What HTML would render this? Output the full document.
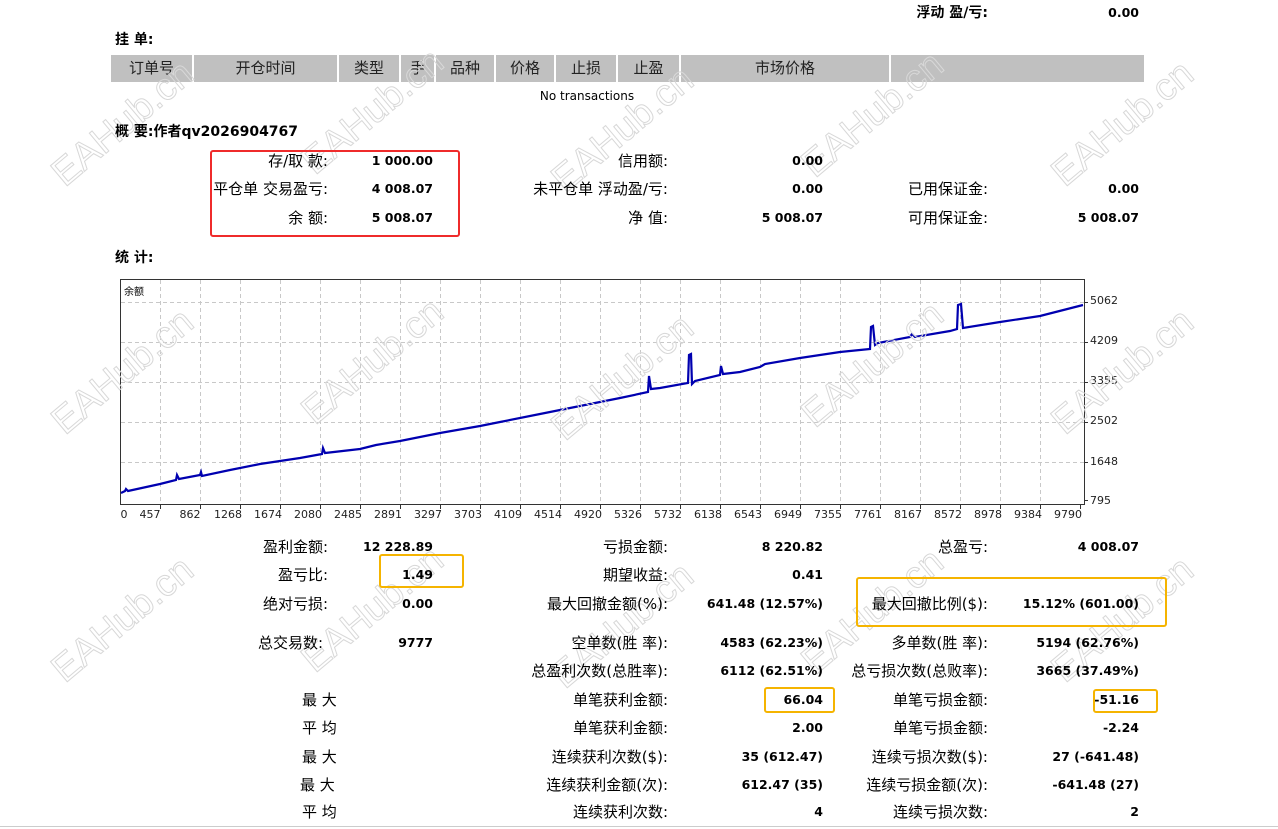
<!DOCTYPE html>
<html><head><meta charset="utf-8"><style>
body{margin:0;width:1278px;height:829px;background:#fff;position:relative;overflow:hidden;font-family:"DejaVu Sans","Noto Sans CJK SC",sans-serif;font-size:15px;color:#000}
.a{position:absolute;white-space:nowrap;line-height:18px;z-index:2}
.r{text-align:right}
.b{font-weight:bold;font-size:12.5px}
.th{position:absolute;top:55px;height:27px;line-height:27px;background:#c0c0c0;text-align:center;font-size:15px;color:#222}
.box{position:absolute;border-radius:3px;z-index:3}
.wm{position:absolute;z-index:1;font-size:38px;font-family:"Liberation Sans",sans-serif;color:transparent;-webkit-text-stroke:1px #d8d8d8;transform:translate(-50%,-50%) rotate(-40deg);white-space:nowrap}
svg{z-index:0}
</style></head><body>

<div class="a b r" style="left:800px;width:188px;top:4px;font-size:14px">浮动 盈/亏:</div>
<div class="a b r" style="left:1000px;width:139px;top:4px">0.00</div>

<div class="a b" style="left:115px;top:31px;font-size:14px">挂 单:</div>
<div class="th" style="left:111px;width:81px">订单号</div>
<div class="th" style="left:194px;width:143px">开仓时间</div>
<div class="th" style="left:339px;width:60px">类型</div>
<div class="th" style="left:401px;width:33px">手</div>
<div class="th" style="left:436px;width:58px">品种</div>
<div class="th" style="left:496px;width:58px">价格</div>
<div class="th" style="left:556px;width:60px">止损</div>
<div class="th" style="left:618px;width:61px">止盈</div>
<div class="th" style="left:681px;width:208px">市场价格</div>
<div class="th" style="left:891px;width:253px"></div>
<div class="a" style="left:487px;width:200px;top:87px;text-align:center;font-size:12px">No transactions</div>

<div class="a b" style="left:115px;top:123px;font-size:14px">概 要:作者qv2026904767</div>

<div class="a r" style="left:150px;width:178px;top:152px">存/取 款:</div>
<div class="a b r" style="left:340px;width:93px;top:152px">1 000.00</div>
<div class="a r" style="left:150px;width:178px;top:180px">平仓单 交易盈亏:</div>
<div class="a b r" style="left:340px;width:93px;top:180px">4 008.07</div>
<div class="a r" style="left:150px;width:178px;top:209px">余 额:</div>
<div class="a b r" style="left:340px;width:93px;top:209px">5 008.07</div>

<div class="a r" style="left:460px;width:208px;top:152px">信用额:</div>
<div class="a b r" style="left:700px;width:123px;top:152px">0.00</div>
<div class="a r" style="left:460px;width:208px;top:180px">未平仓单 浮动盈/亏:</div>
<div class="a b r" style="left:700px;width:123px;top:180px">0.00</div>
<div class="a r" style="left:460px;width:208px;top:209px">净 值:</div>
<div class="a b r" style="left:700px;width:123px;top:209px">5 008.07</div>

<div class="a r" style="left:830px;width:158px;top:180px">已用保证金:</div>
<div class="a b r" style="left:1000px;width:139px;top:180px">0.00</div>
<div class="a r" style="left:830px;width:158px;top:209px">可用保证金:</div>
<div class="a b r" style="left:1000px;width:139px;top:209px">5 008.07</div>

<div class="box" style="left:210px;top:150px;width:246px;height:83px;border:2px solid #ef2b2b"></div>

<div class="a b" style="left:115px;top:249px;font-size:14px">统 计:</div>

<svg style="position:absolute;left:0;top:0" width="1278" height="829">
<rect x="120.5" y="279.5" width="964" height="225" fill="#fff" stroke="#333" stroke-width="1"/>
<g stroke="#c8c8c8" stroke-dasharray="4,3" stroke-width="1">
<path d="M160.5 280V504M200.5 280V504M240.5 280V504M280.5 280V504M320.5 280V504M360.5 280V504M400.5 280V504M440.5 280V504M480.5 280V504M520.5 280V504M560.5 280V504M600.5 280V504M640.5 280V504M680.5 280V504M720.5 280V504M760.5 280V504M800.5 280V504M840.5 280V504M880.5 280V504M920.5 280V504M960.5 280V504M1000.5 280V504M1040.5 280V504"/>
<path d="M121 302.5H1084M121 342.5H1084M121 382.5H1084M121 422.5H1084M121 462.5H1084"/>
</g>
<g stroke="#333"><path d="M160.5 505v4M200.5 505v4M240.5 505v4M280.5 505v4M320.5 505v4M360.5 505v4M400.5 505v4M440.5 505v4M480.5 505v4M520.5 505v4M560.5 505v4M600.5 505v4M640.5 505v4M680.5 505v4M720.5 505v4M760.5 505v4M800.5 505v4M840.5 505v4M880.5 505v4M920.5 505v4M960.5 505v4M1000.5 505v4M1040.5 505v4M1080.5 505v4M1085 302.5h3M1085 342.5h3M1085 382.5h3M1085 422.5h3M1085 462.5h3M1085 500.5h3"/></g>
<polyline fill="none" stroke="#0000b0" stroke-width="2.2" points="121,493 125,491 126,489 128,491 160,484 176,480 177,475 179,479 200,475 201,472 202,476 230,470 260,464 300,458 322,454 323,448 325,453 360,449 376,445 400,441 440,433 480,426 500,422 540,414 580,406 620,398 648,392 649,376 651,389 660,388 688,383 689,355 691,354 692,384 695,381 720,375 721,366 723,374 740,372 760,367 765,364 800,358 840,352 870,349 871,327 873,326 875,345 878,343 910,337 912,334 915,337 950,331 957,329 958,305 961,304 963,328 1000,322 1040,316 1083,305"/>
<text x="124" y="295" font-size="10" font-family="Noto Sans CJK SC,sans-serif">余额</text>
<g font-size="11" font-family="DejaVu Sans,sans-serif" fill="#222">
<text x="1090" y="304">5062</text><text x="1090" y="344">4209</text><text x="1090" y="384">3355</text><text x="1090" y="424">2502</text><text x="1090" y="465">1648</text><text x="1090" y="504">795</text>
<g text-anchor="middle">
<text x="124" y="518">0</text><text x="150" y="518">457</text><text x="190" y="518">862</text><text x="228" y="518">1268</text><text x="268" y="518">1674</text><text x="308" y="518">2080</text><text x="348" y="518">2485</text><text x="388" y="518">2891</text><text x="428" y="518">3297</text><text x="468" y="518">3703</text><text x="508" y="518">4109</text><text x="548" y="518">4514</text><text x="588" y="518">4920</text><text x="628" y="518">5326</text><text x="668" y="518">5732</text><text x="708" y="518">6138</text><text x="748" y="518">6543</text><text x="788" y="518">6949</text><text x="828" y="518">7355</text><text x="868" y="518">7761</text><text x="908" y="518">8167</text><text x="948" y="518">8572</text><text x="988" y="518">8978</text><text x="1028" y="518">9384</text><text x="1068" y="518">9790</text>
</g></g>
<path d="M0 826.5H1278" stroke="#ccc"/>
</svg>

<div class="a r" style="left:150px;width:178px;top:538px">盈利金额:</div>
<div class="a b r" style="left:330px;width:103px;top:538px">12 228.89</div>
<div class="a r" style="left:150px;width:178px;top:566px">盈亏比:</div>
<div class="a b r" style="left:340px;width:93px;top:566px">1.49</div>
<div class="a r" style="left:150px;width:178px;top:595px">绝对亏损:</div>
<div class="a b r" style="left:340px;width:93px;top:595px">0.00</div>
<div class="a r" style="left:150px;width:173px;top:634px">总交易数:</div>
<div class="a b r" style="left:340px;width:93px;top:634px">9777</div>
<div class="a" style="left:302px;top:691px">最 大</div>
<div class="a" style="left:302px;top:719px">平 均</div>
<div class="a" style="left:302px;top:748px">最 大</div>
<div class="a" style="left:300px;top:776px">最 大</div>
<div class="a" style="left:302px;top:803px">平 均</div>

<div class="a r" style="left:460px;width:208px;top:538px">亏损金额:</div>
<div class="a b r" style="left:700px;width:123px;top:538px">8 220.82</div>
<div class="a r" style="left:460px;width:208px;top:566px">期望收益:</div>
<div class="a b r" style="left:700px;width:123px;top:566px">0.41</div>
<div class="a r" style="left:460px;width:208px;top:595px">最大回撤金额(%):</div>
<div class="a b r" style="left:660px;width:163px;top:595px">641.48 (12.57%)</div>
<div class="a r" style="left:460px;width:208px;top:634px">空单数(胜 率):</div>
<div class="a b r" style="left:660px;width:163px;top:634px">4583 (62.23%)</div>
<div class="a r" style="left:460px;width:208px;top:662px">总盈利次数(总胜率):</div>
<div class="a b r" style="left:660px;width:163px;top:662px">6112 (62.51%)</div>
<div class="a r" style="left:460px;width:208px;top:691px">单笔获利金额:</div>
<div class="a b r" style="left:660px;width:163px;top:691px">66.04</div>
<div class="a r" style="left:460px;width:208px;top:719px">单笔获利金额:</div>
<div class="a b r" style="left:660px;width:163px;top:719px">2.00</div>
<div class="a r" style="left:460px;width:208px;top:748px">连续获利次数($):</div>
<div class="a b r" style="left:660px;width:163px;top:748px">35 (612.47)</div>
<div class="a r" style="left:460px;width:208px;top:776px">连续获利金额(次):</div>
<div class="a b r" style="left:660px;width:163px;top:776px">612.47 (35)</div>
<div class="a r" style="left:460px;width:208px;top:803px">连续获利次数:</div>
<div class="a b r" style="left:660px;width:163px;top:803px">4</div>

<div class="a r" style="left:780px;width:208px;top:538px">总盈亏:</div>
<div class="a b r" style="left:1000px;width:139px;top:538px">4 008.07</div>
<div class="a r" style="left:780px;width:208px;top:595px">最大回撤比例($):</div>
<div class="a b r" style="left:980px;width:159px;top:595px">15.12% (601.00)</div>
<div class="a r" style="left:780px;width:208px;top:634px">多单数(胜 率):</div>
<div class="a b r" style="left:980px;width:159px;top:634px">5194 (62.76%)</div>
<div class="a r" style="left:780px;width:208px;top:662px">总亏损次数(总败率):</div>
<div class="a b r" style="left:980px;width:159px;top:662px">3665 (37.49%)</div>
<div class="a r" style="left:780px;width:208px;top:691px">单笔亏损金额:</div>
<div class="a b r" style="left:1000px;width:139px;top:691px">-51.16</div>
<div class="a r" style="left:780px;width:208px;top:719px">单笔亏损金额:</div>
<div class="a b r" style="left:1000px;width:139px;top:719px">-2.24</div>
<div class="a r" style="left:780px;width:208px;top:748px">连续亏损次数($):</div>
<div class="a b r" style="left:980px;width:159px;top:748px">27 (-641.48)</div>
<div class="a r" style="left:780px;width:208px;top:776px">连续亏损金额(次):</div>
<div class="a b r" style="left:980px;width:159px;top:776px">-641.48 (27)</div>
<div class="a r" style="left:780px;width:208px;top:803px">连续亏损次数:</div>
<div class="a b r" style="left:1000px;width:139px;top:803px">2</div>

<div class="box" style="left:379px;top:554px;width:81px;height:30px;border:2px solid #f5b400"></div>
<div class="box" style="left:856px;top:577px;width:307px;height:46px;border:2px solid #f5b400"></div>
<div class="box" style="left:764px;top:687px;width:67px;height:22px;border:2px solid #f5b400"></div>
<div class="box" style="left:1093px;top:689px;width:61px;height:20px;border:2px solid #f5b400"></div>

<div class="wm" style="left:123px;top:124px">EAHub.cn</div>
<div class="wm" style="left:373px;top:112px">EAHub.cn</div>
<div class="wm" style="left:623px;top:130px">EAHub.cn</div>
<div class="wm" style="left:873px;top:115px">EAHub.cn</div>
<div class="wm" style="left:1123px;top:124px">EAHub.cn</div>
<div class="wm" style="left:123px;top:372px">EAHub.cn</div>
<div class="wm" style="left:373px;top:362px">EAHub.cn</div>
<div class="wm" style="left:623px;top:378px">EAHub.cn</div>
<div class="wm" style="left:873px;top:365px">EAHub.cn</div>
<div class="wm" style="left:1123px;top:372px">EAHub.cn</div>
<div class="wm" style="left:123px;top:620px">EAHub.cn</div>
<div class="wm" style="left:373px;top:610px">EAHub.cn</div>
<div class="wm" style="left:623px;top:626px">EAHub.cn</div>
<div class="wm" style="left:873px;top:612px">EAHub.cn</div>
<div class="wm" style="left:1123px;top:620px">EAHub.cn</div>
</body></html>
